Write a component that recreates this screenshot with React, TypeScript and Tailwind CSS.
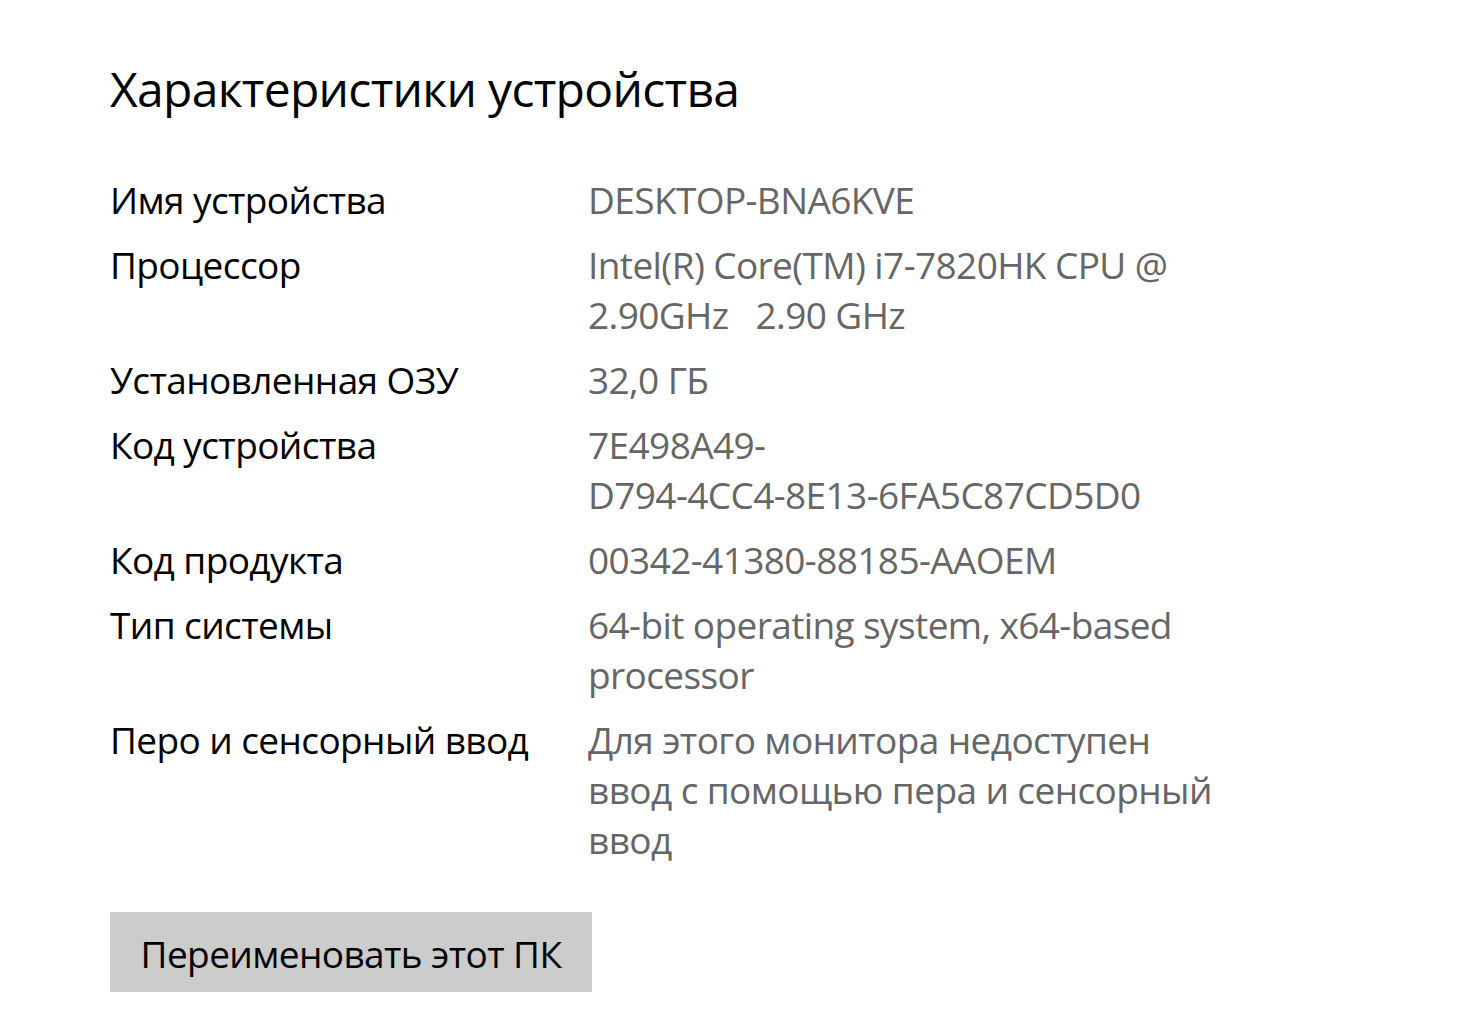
import React from 'react';

interface SpecRow {
  label: string;
  lines: string[];
}

const rows: SpecRow[] = [
  { label: 'Имя устройства', lines: ['DESKTOP-BNA6KVE'] },
  { label: 'Процессор', lines: ['Intel(R) Core(TM) i7-7820HK CPU @', '2.90GHz   2.90 GHz'] },
  { label: 'Установленная ОЗУ', lines: ['32,0 ГБ'] },
  { label: 'Код устройства', lines: ['7E498A49-', 'D794-4CC4-8E13-6FA5C87CD5D0'] },
  { label: 'Код продукта', lines: ['00342-41380-88185-AAOEM'] },
  { label: 'Тип системы', lines: ['64-bit operating system, x64-based', 'processor'] },
  {
    label: 'Перо и сенсорный ввод',
    lines: ['Для этого монитора недоступен', 'ввод с помощью пера и сенсорный', 'ввод'],
  },
];

const App: React.FC = () => {
  return (
    <div
      className="min-h-screen w-full bg-white pl-[110px] pt-[59px] text-black"
      style={{ fontFamily: '"Segoe UI", "Open Sans", "Noto Sans", sans-serif' }}
    >
      {/* Section title */}
      <h2 className="text-[48px] font-normal leading-[60px] tracking-[-0.7px]">Характеристики устройства</h2>

      {/* Spec list */}
      <div className="mt-[56px] flex flex-col gap-[15px]">
        {rows.map((row) => (
          <div key={row.label} className="flex text-[37px] leading-[50px] tracking-[-0.6px]">
            <div className="w-[478px] shrink-0 whitespace-nowrap">{row.label}</div>
            <div className="flex flex-col text-[#666666]">
              {row.lines.map((line, i) => (
                <span key={i} className="whitespace-pre">
                  {line}
                </span>
              ))}
            </div>
          </div>
        ))}
      </div>

      {/* Rename button */}
      <button className="mt-[47px] flex h-[80px] w-[482px] items-center justify-center bg-[#cccccc] pt-[4px] text-[37px] leading-[50px] tracking-[-0.6px] text-black">
        Переименовать этот ПК
      </button>
    </div>
  );
};

export default App;
